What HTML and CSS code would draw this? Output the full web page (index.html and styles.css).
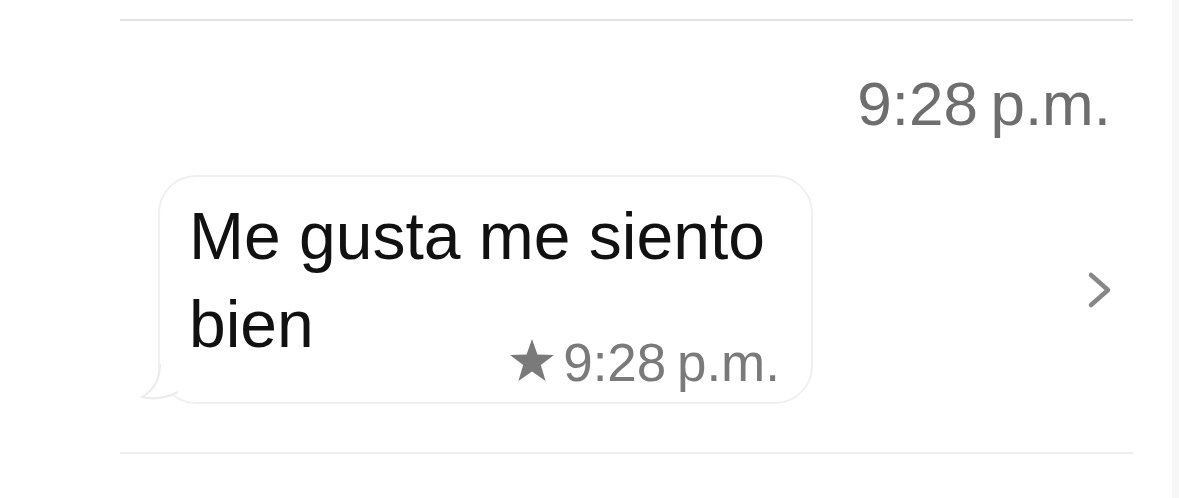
FILE: index.html
```html
<!DOCTYPE html>
<html lang="es">
<head>
    <meta charset="UTF-8">
    <meta name="viewport" content="width=device-width, initial-scale=1.0">
    <title>Mensajes</title>
    <link rel="stylesheet" href="styles.css">
</head>
<body>
    <div class="screen">
        <div class="thread">
            <div class="divider"></div>

            <div class="day-time">9:28&#8201;p.m.</div>

            <div class="message-row">
                <div class="bubble">
                    <svg class="bubble-tail" width="50" height="40" viewBox="0 0 50 40">
                        <path d="M20 0 C20 14 14 26 2 33 C14 36 26 34 38 28" fill="#ffffff" stroke="#ececec" stroke-width="2"/>
                    </svg>
                    <p class="bubble-text">Me gusta me siento bien<span class="bubble-meta"><svg class="star" width="46" height="44" viewBox="0 0 46 44"><path d="M23 1 L28.4 16.6 L45 16.9 L31.8 27 L36.6 43 L23 33.4 L9.4 43 L14.2 27 L1 16.9 L17.6 16.6 Z" fill="#7a7a7a"/></svg>9:28&#8201;p.m.</span></p>
                </div>

                <svg class="chevron" width="26" height="38" viewBox="0 0 26 38">
                    <path d="M4 4 L21 19 L4 34" fill="none" stroke="#878787" stroke-width="4.5" stroke-linecap="round" stroke-linejoin="round"/>
                </svg>
            </div>

            <div class="divider divider-bottom"></div>
        </div>
        <div class="side-strip"></div>
    </div>
</body>
</html>
```

FILE: styles.css
```css
body {
    margin: 0;
    background-color: #ffffff;
    font-family: "Liberation Sans", Arial, sans-serif;
}

.screen {
    display: flex;
    height: 498px;
    overflow: hidden;
}

.thread {
    flex: 1;
    padding: 19px 39px 0 120px;
}

.side-strip {
    width: 7px;
    background-color: #f7f7f7;
}

.divider {
    height: 2px;
    background-color: #e2e2e2;
}

.divider-bottom {
    background-color: #eeeeee;
    margin-top: 48px;
}

.day-time {
    text-align: right;
    padding-right: 22px;
    font-size: 62px;
    line-height: 62px;
    margin-top: 52px;
    color: #6e6e6e;
}

.message-row {
    display: flex;
    align-items: center;
    margin-top: 40px;
}

.bubble {
    position: relative;
    margin-left: 38px;
    width: 655px;
    height: 229px;
    box-sizing: border-box;
    border: 2px solid #f0f0f0;
    border-radius: 38px;
    padding: 15px 31px 0 29px;
    background-color: #ffffff;
}

.bubble-tail {
    position: absolute;
    left: -20px;
    bottom: -2px;
}

.bubble-text {
    margin: 0;
    font-size: 66px;
    line-height: 88px;
    color: #111111;
}

/* hora dentro de la burbuja, abajo a la derecha */
.bubble-meta {
    float: right;
    display: flex;
    align-items: baseline;
    margin-top: 56px;
    font-size: 53px;
    line-height: 53px;
    color: #7a7a7a;
}

.star {
    margin-right: 8px;
    position: relative;
    top: 1px;
}

.chevron {
    margin-left: auto;
    margin-right: 20px;
}
```
